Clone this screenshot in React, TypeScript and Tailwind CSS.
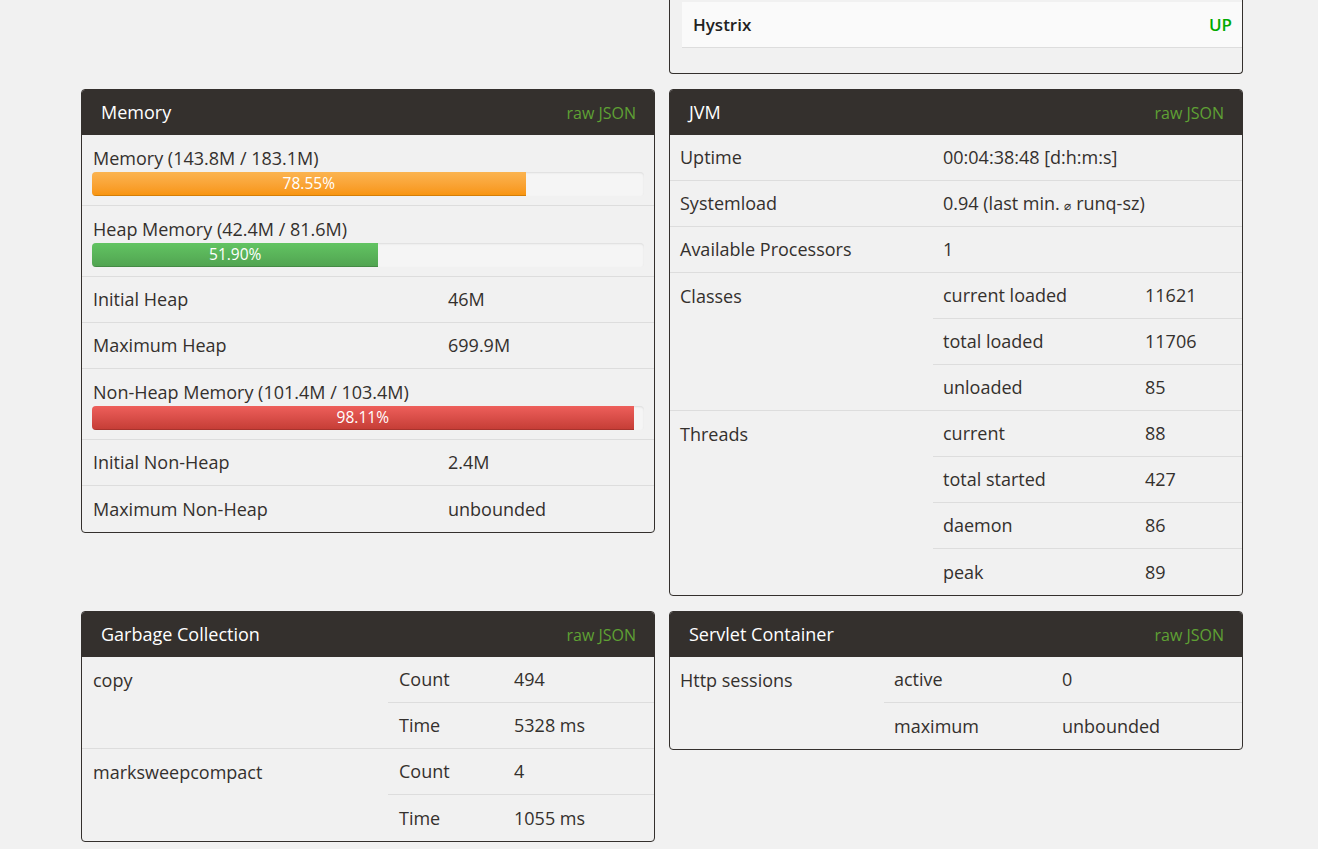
import React from "react";

const font = { fontFamily: '"Open Sans", "Noto Sans", sans-serif' };

function Card({ title, children }: { title: string; children: React.ReactNode }) {
  return (
    <div className="overflow-hidden rounded-[4px] border border-[#34302d] bg-[#f1f1f1]">
      <div className="flex h-[45px] items-center justify-between bg-[#34302d] pl-[19px] pr-[18px]">
        <span className="text-[18px] text-white">{title}</span>
        <span className="text-[16px] text-[#5fa134]">raw JSON</span>
      </div>
      {children}
    </div>
  );
}

function Bar({ label, pct, color }: { label: string; pct: number; color: "orange" | "green" | "red" }) {
  const fill =
    color === "orange"
      ? "bg-gradient-to-b from-[#fbb450] to-[#f89406]"
      : color === "green"
        ? "bg-gradient-to-b from-[#62c462] to-[#51a351]"
        : "bg-gradient-to-b from-[#ee5f5b] to-[#c43c35]";
  return (
    <div className="h-[71px] border-b border-[#ddd] px-[10px] pt-[11px]">
      <div className="pl-px leading-[24px]">{label}</div>
      <div className="mt-[2px] h-[24px] overflow-hidden rounded-[4px] bg-[#f5f5f5] shadow-[inset_0_1px_2px_rgba(0,0,0,0.1)]">
        <div
          className={`flex h-full items-center justify-center text-[15.5px] text-white shadow-[inset_0_-1px_0_rgba(0,0,0,0.15)] ${fill}`}
          style={{ width: `${pct}%` }}
        >
          {pct.toFixed(2)}%
        </div>
      </div>
    </div>
  );
}

function Row({ label, value, last }: { label: string; value: string; last?: boolean }) {
  return (
    <div className={`grid h-[46px] grid-cols-[355px_1fr] items-center ${last ? "" : "border-b border-[#ddd]"}`}>
      <div className="pl-[11px]">{label}</div>
      <div className="pl-[11px]">{value}</div>
    </div>
  );
}

function Group({
  label,
  items,
  c1,
  c2,
  last,
}: {
  label: string;
  items: [string, string][];
  c1: string;
  c2: string;
  last?: boolean;
}) {
  return (
    <div className={`flex ${last ? "" : "border-b border-[#ddd]"}`}>
      <div className={`${c1} shrink-0 pt-[11px] leading-[24px]`}>{label}</div>
      <div className="flex-1">
        {items.map(([k, v], i) => {
          const isLast = i === items.length - 1;
          return (
            <div
              key={k}
              className={`flex items-center ${isLast ? (last ? "h-[46px]" : "h-[45px]") : "h-[46px] border-b border-[#ddd]"}`}
            >
              <div className={`${c2} shrink-0`}>{k}</div>
              <div className="pl-[10px]">{v}</div>
            </div>
          );
        })}
      </div>
    </div>
  );
}

function Line({ label, value }: { label: string; value: React.ReactNode }) {
  return (
    <div className="flex h-[46px] items-center border-b border-[#ddd]">
      <div className="w-[263px] pl-[10px]">{label}</div>
      <div className="pl-[10px]">{value}</div>
    </div>
  );
}

export default function App() {
  return (
    <div className="min-h-[849px] bg-[#f1f1f1] text-[18px] text-[#34302d]" style={font}>
      <div className="ml-[81px] flex w-[1162px] flex-col gap-[15px]">
        <div className="grid grid-cols-2 gap-[14px]">
          <div />
          <div className="h-[74px] rounded-b-[4px] border-x border-b border-[#34302d] bg-[#f1f1f1] pl-[12px] pt-[2px]">
            <div className="flex h-[46px] items-center justify-between border-b border-[#ddd] bg-[#fafafa] pl-[11px] pr-[10px]">
              <span className="text-[17px] font-semibold text-[#222]">Hystrix</span>
              <span className="text-[17px] font-semibold text-[#00aa00]">UP</span>
            </div>
          </div>
        </div>

        <div className="grid grid-cols-2 items-start gap-[14px]">
          <Card title="Memory">
            <Bar label="Memory (143.8M / 183.1M)" pct={78.55} color="orange" />
            <Bar label="Heap Memory (42.4M / 81.6M)" pct={51.9} color="green" />
            <Row label="Initial Heap" value="46M" />
            <Row label="Maximum Heap" value="699.9M" />
            <Bar label="Non-Heap Memory (101.4M / 103.4M)" pct={98.11} color="red" />
            <Row label="Initial Non-Heap" value="2.4M" />
            <Row label="Maximum Non-Heap" value="unbounded" last />
          </Card>

          <Card title="JVM">
            <Line label="Uptime" value="00:04:38:48 [d:h:m:s]" />
            <Line
              label="Systemload"
              value={
                <>
                  0.94 (last min. <span className="text-[12px]">⌀</span> runq-sz)
                </>
              }
            />
            <Line label="Available Processors" value="1" />
            <Group
              label="Classes"
              c1="w-[263px] pl-[10px]"
              c2="w-[202px] pl-[10px]"
              items={[
                ["current loaded", "11621"],
                ["total loaded", "11706"],
                ["unloaded", "85"],
              ]}
            />
            <Group
              label="Threads"
              c1="w-[263px] pl-[10px]"
              c2="w-[202px] pl-[10px]"
              last
              items={[
                ["current", "88"],
                ["total started", "427"],
                ["daemon", "86"],
                ["peak", "89"],
              ]}
            />
          </Card>
        </div>

        <div className="grid grid-cols-2 items-start gap-[14px]">
          <Card title="Garbage Collection">
            <Group
              label="copy"
              c1="w-[306px] pl-[11px]"
              c2="w-[116px] pl-[11px]"
              items={[
                ["Count", "494"],
                ["Time", "5328 ms"],
              ]}
            />
            <Group
              label="marksweepcompact"
              c1="w-[306px] pl-[11px]"
              c2="w-[116px] pl-[11px]"
              last
              items={[
                ["Count", "4"],
                ["Time", "1055 ms"],
              ]}
            />
          </Card>

          <Card title="Servlet Container">
            <Group
              label="Http sessions"
              c1="w-[214px] pl-[10px]"
              c2="w-[168px] pl-[10px]"
              last
              items={[
                ["active", "0"],
                ["maximum", "unbounded"],
              ]}
            />
          </Card>
        </div>
      </div>
    </div>
  );
}
